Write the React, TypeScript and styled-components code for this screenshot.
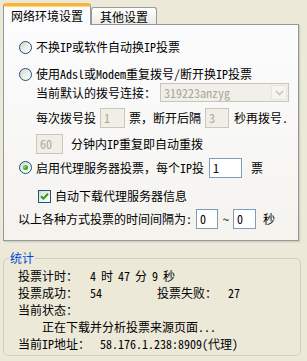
import React from 'react';
import styled, { createGlobalStyle, css } from 'styled-components';

const GlobalStyle = createGlobalStyle`
  html, body {
    margin: 0;
    padding: 0;
    background: #ece9d8;
  }
  body {
    font-family: "Noto Sans Mono CJK SC", "Noto Sans CJK SC", sans-serif;
    font-size: 12px;
    color: #000;
  }
`;

const Window = styled.div`
  width: 307px;
  height: 361px;
  box-sizing: border-box;
  padding: 3px 6px 0 3px;
  display: flex;
  flex-direction: column;
  background: #ece9d8;
  overflow: hidden;
`;

const TabStrip = styled.div`
  display: flex;
  align-items: flex-end;
  height: 22px;
  margin-bottom: -1px;
  position: relative;
  z-index: 1;
`;

const Tab = styled.div<{ $active?: boolean }>`
  box-sizing: border-box;
  display: flex;
  align-items: center;
  justify-content: center;
  border: 1px solid #919b9c;
  border-bottom: none;
  border-radius: 3px 3px 0 0;
  line-height: 14px;
  ${(p) =>
    p.$active
      ? css`
          width: 88px;
          height: 22px;
          padding-top: 1px;
          border-top: 3px solid #f7b33a;
          background: #fcfcfe;
          box-shadow: inset 0 1px 0 #ffd87a;
        `
      : css`
          width: 66px;
          height: 17px;
          margin-bottom: 1px;
          padding-top: 1px;
          background: linear-gradient(#ffffff, #ecebe5);
        `}
`;

const Panel = styled.div`
  box-sizing: border-box;
  width: 296px;
  height: 217px;
  border: 1px solid #919b9c;
  background: linear-gradient(#fcfcfe, #f4f3ee);
  box-shadow: 1px 1px 0 #d2cebf, 2px 2px 0 #e2dfd0;
  display: flex;
  flex-direction: column;
`;

const Row = styled.div<{ $mt: number; $h: number; $indent: number }>`
  display: flex;
  align-items: center;
  height: ${(p) => p.$h}px;
  margin-top: ${(p) => p.$mt}px;
  padding-left: ${(p) => p.$indent}px;
  white-space: nowrap;
  line-height: 14px;
`;

const Label = styled.span<{ $gap?: number }>`
  margin-left: ${(p) => p.$gap ?? 0}px;
`;

const RadioMark = styled.span<{ $checked?: boolean }>`
  position: relative;
  box-sizing: border-box;
  width: 13px;
  height: 13px;
  flex: none;
  margin-right: 4px;
  border-radius: 50%;
  border: 1px solid #1c5180;
  background: linear-gradient(135deg, #d6d3c9 0%, #f1f0ea 55%, #ffffff 100%);
  ${(p) =>
    p.$checked &&
    css`
      &::after {
        content: '';
        position: absolute;
        left: 3px;
        top: 3px;
        width: 5px;
        height: 5px;
        border-radius: 50%;
        background: radial-gradient(circle at 35% 35%, #8ee08e 0%, #2fb52f 45%, #1b8a1b 100%);
      }
    `}
`;

const CheckMark = styled.span`
  box-sizing: border-box;
  width: 13px;
  height: 13px;
  flex: none;
  margin-right: 4px;
  border: 1px solid #1c5180;
  background: linear-gradient(135deg, #dcdad2 0%, #f3f2ec 60%, #ffffff 100%);
  display: flex;
  align-items: center;
  justify-content: center;
`;

// XP style edit box; disabled ones go beige with grey text
const TextBox = styled.div<{ $w: number; $ml?: number; $disabled?: boolean }>`
  box-sizing: border-box;
  width: ${(p) => p.$w}px;
  height: 20px;
  flex: none;
  margin-left: ${(p) => p.$ml ?? 0}px;
  display: flex;
  align-items: center;
  padding-left: 3px;
  border: 1px solid ${(p) => (p.$disabled ? '#c9c7ba' : '#7f9db9')};
  background: ${(p) => (p.$disabled ? '#efeee7' : '#ffffff')};
  color: ${(p) => (p.$disabled ? '#aca899' : '#000')};
`;

const Select = styled.div`
  box-sizing: border-box;
  width: 129px;
  height: 19px;
  margin-left: 4px;
  display: flex;
  align-items: center;
  border: 1px solid #c9c7ba;
  background: #f0efe9;
  color: #aca899;
`;

const SelectText = styled.span`
  flex: 1;
  padding-left: 3px;
`;

const SelectButton = styled.span`
  box-sizing: border-box;
  width: 16px;
  height: 15px;
  margin-right: 1px;
  display: flex;
  align-items: center;
  justify-content: center;
  border: 1px solid #e8e6dc;
  border-radius: 1px;
  background: #f5f4ef;
`;

const Group = styled.fieldset`
  box-sizing: border-box;
  width: 298px;
  margin: 10px 0 0 0;
  padding: 0;
  border: 1px solid #d0d0bf;
  border-radius: 5px;
  min-width: 0;
`;

const Legend = styled.legend`
  margin-left: 5px;
  padding: 0 1px;
  line-height: 14px;
  color: #0046d5;
`;

const StatsBody = styled.div`
  padding: 2px 0 3px 14px;
`;

const StatLine = styled.div<{ $indent?: number }>`
  display: flex;
  align-items: center;
  height: 17px;
  padding-left: ${(p) => p.$indent ?? 0}px;
  white-space: nowrap;
`;

const StatCell = styled.div<{ $w?: number }>`
  display: flex;
  align-items: center;
  width: ${(p) => (p.$w ? `${p.$w}px` : 'auto')};
`;

const StatValue = styled.span<{ $gap: number }>`
  margin-left: ${(p) => p.$gap}px;
`;

const TimeParts = styled.span`
  display: flex;
  gap: 5px;
  margin-left: 12px;
`;

function Radio({ checked, children }: { checked?: boolean; children: React.ReactNode }) {
  return (
    <>
      <RadioMark $checked={checked} />
      {children}
    </>
  );
}

export default function App() {
  return (
    <>
      <GlobalStyle />
      <Window>
        <TabStrip>
          <Tab $active>网络环境设置</Tab>
          <Tab>其他设置</Tab>
        </TabStrip>
        <Panel>
          <Row $mt={13} $h={18} $indent={15}>
            <Radio>不换IP或软件自动换IP投票</Radio>
          </Row>
          <Row $mt={9} $h={18} $indent={15}>
            <Radio>使用Adsl或Modem重复拨号/断开换IP投票</Radio>
          </Row>
          <Row $mt={0} $h={19} $indent={32}>
            <Label>当前默认的拨号连接：</Label>
            <Select>
              <SelectText>319223anzyg</SelectText>
              <SelectButton>
                <svg width="9" height="6" viewBox="0 0 9 6">
                  <path d="M1 1 L4.5 4.5 L8 1" fill="none" stroke="#c9c7ba" strokeWidth="1.6" />
                </svg>
              </SelectButton>
            </Select>
          </Row>
          <Row $mt={5} $h={21} $indent={32}>
            <Label>每次拨号投</Label>
            <TextBox $w={25} $ml={4} $disabled>1</TextBox>
            <Label $gap={4}>票，断开后隔</Label>
            <TextBox $w={24} $ml={4} $disabled>3</TextBox>
            <Label $gap={5}>秒再拨号.</Label>
          </Row>
          <Row $mt={5} $h={21} $indent={32}>
            <TextBox $w={27} $disabled>60</TextBox>
            <Label $gap={8}>分钟内IP重复即自动重拨</Label>
          </Row>
          <Row $mt={3} $h={21} $indent={15}>
            <Radio checked>启用代理服务器投票，每个IP投</Radio>
            <TextBox $w={33} $ml={5}>1</TextBox>
            <Label $gap={9}>票</Label>
          </Row>
          <Row $mt={9} $h={18} $indent={34}>
            <CheckMark>
              <svg width="9" height="9" viewBox="0 0 9 9">
                <path d="M1 4.2 L3.4 6.6 L8 1.8" fill="none" stroke="#21a121" strokeWidth="2" />
              </svg>
            </CheckMark>
            自动下载代理服务器信息
          </Row>
          <Row $mt={3} $h={21} $indent={14}>
            <Label>以上各种方式投票的时间间隔为:</Label>
            <TextBox $w={22} $ml={4}>0</TextBox>
            <Label $gap={5}>~</Label>
            <TextBox $w={23} $ml={4}>0</TextBox>
            <Label $gap={7}>秒</Label>
          </Row>
        </Panel>
        <Group>
          <Legend>统计</Legend>
          <StatsBody>
            <StatLine>
              <span>投票计时：</span>
              <TimeParts>
                <span>4</span>
                <span>时</span>
                <span>47</span>
                <span>分</span>
                <span>9</span>
                <span>秒</span>
              </TimeParts>
            </StatLine>
            <StatLine>
              <StatCell $w={139}>
                <span>投票成功：</span>
                <StatValue $gap={12}>54</StatValue>
              </StatCell>
              <StatCell>
                <span>投票失败：</span>
                <StatValue $gap={11}>27</StatValue>
              </StatCell>
            </StatLine>
            <StatLine>当前状态：</StatLine>
            <StatLine $indent={24}>正在下载并分析投票来源页面...</StatLine>
            <StatLine>
              <span>当前IP地址：</span>
              <StatValue $gap={10}>58.176.1.238:8909(代理)</StatValue>
            </StatLine>
          </StatsBody>
        </Group>
      </Window>
    </>
  );
}
